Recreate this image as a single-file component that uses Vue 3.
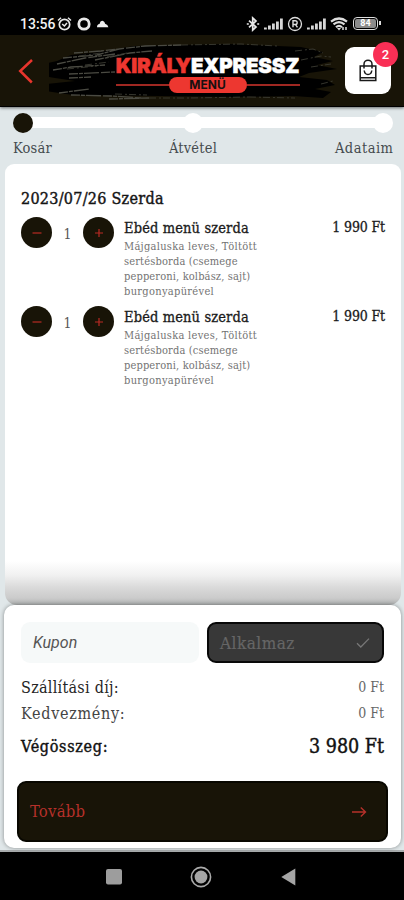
<script setup>
const steps = ['Kosár', 'Átvétel', 'Adataim']
const items = [1, 2].map((id) => ({
  id,
  qty: 1,
  name: 'Ebéd menü szerda',
  lines: ['Májgaluska leves, Töltött', 'sertésborda (csemege', 'pepperoni, kolbász, sajt)', 'burgonyapürével'],
  price: '1 990 Ft',
}))
const bars = [2, 4, 6, 8, 11]
</script>

<template>
  <div class="screen">
    <div class="status">
      <span class="clock">13:56</span>
      <svg class="status-left" width="52" height="16" viewBox="0 0 52 16" fill="none" stroke="#e8e8e8">
        <circle cx="7.5" cy="8.5" r="5.2" stroke-width="1.7" />
        <path d="M1 4.5 4 1.8M14 4.5 11 1.8M5.2 8l2.2 2 2.6-3" stroke-width="1.5" />
        <circle cx="27" cy="8" r="5.2" stroke-width="2.8" />
        <path d="M40 11.2q0-3 2.5-3.2 1-4 3.6-3 1.6.7 2 2.8 2.8.8 3.3 3.4z" fill="#eee" stroke="none" />
      </svg>
      <div class="status-right">
        <svg width="16" height="16" viewBox="0 0 16 16" fill="none" stroke="#e8e8e8" stroke-width="1.7">
          <path d="M4 4.6 11 11 7.7 14V2L11 5 4 11.4" />
          <path d="M1.8 8h2M12.2 8h2" />
        </svg>
        <svg class="signal" width="19" height="12" viewBox="0 0 19 12" fill="#d6d6d6">
          <rect v-for="(h, i) in bars" :key="i" :x="i * 4" :y="11.5 - h" width="2.8" :height="h" />
        </svg>
        <svg class="reg" width="16" height="16" viewBox="0 0 16 16" fill="none" stroke="#ddd">
          <circle cx="8" cy="8" r="6.5" stroke-width="1.3" />
          <path d="M6 11.3V4.8h2.3a1.8 1.8 0 0 1 0 3.7H6M8.5 8.6l2 2.7" stroke-width="1.4" />
        </svg>
        <svg class="signal" width="19" height="12" viewBox="0 0 19 12" fill="#d6d6d6">
          <rect v-for="(h, i) in bars" :key="i" :x="i * 4" :y="11.5 - h" width="2.8" :height="h" />
        </svg>
        <svg class="wifi" width="18" height="14" viewBox="0 0 18 14" fill="none" stroke="#ddd" stroke-width="2.2">
          <path d="M1 4.6q8-6.2 16 0M3.5 7.4q5.5-4.5 11 0M6 10.2q3-2.8 6 0" />
          <path d="M7 11 9 13.4l2-2.4z" fill="#ddd" stroke="none" />
          <path d="M13 10v3M16 10v3" stroke-width="1.5" />
        </svg>
        <div class="battery"><span>84</span></div>
      </div>
    </div>

    <header class="header">
      <svg class="back" width="16" height="26" viewBox="0 0 16 26" fill="none" stroke="#e8352d" stroke-width="2.5">
        <path d="M14 2 2.2 13 13.8 24.5" />
      </svg>
      <div class="brand">
        <svg class="brush" width="292" height="62" viewBox="0 0 292 62">
          <path
            fill="#000"
            d="M22 15 50 12 85 6 180 4l72 3 22 5-9 5 19 4-16 4 20 4-28 4-10 4 28 3 8 5-20 4 16 3-8 6-30-2-62 1-70-1-88-1-28-4 2-7 28-3-20-3-28-5 20-3-14-4 24-5z"
          />
          <g fill="none" stroke="#4a4a42" stroke-width="1.3" stroke-dasharray="9 1 4 1 15 2">
            <path d="M25 13 52 11 70 9M14 18l34-3 22-6 26-3 36-1M8 24l28-6 30-4M4 30l18-3 34-2M20 34l46-2M46 20l35-7 22-2" />
            <path d="M10 53l30-4M22 55l40 1 30 2M60 59l40-1M20 38l22-1" />
          </g>
          <g fill="none" stroke="#3b3b32" stroke-width=".9" stroke-dasharray="7 3 2 2">
            <path d="M132 5l60-1 36 2M246 11l18-2 10 4M252 20l20-4 10 1M262 27l20-3M272 44l12-3M100 58l40 0 60-1M200 57l46 1" />
            <path d="M18 29l30-3M30 16l22-3M36 25l24-3M58 17l20-4M66 54l32 1" />
          </g>
        </svg>
        <div class="title"><span>KIRÁLY</span>EXPRESSZ</div>
        <div class="sub"><b>MENÜ</b></div>
      </div>
      <div class="cart">
        <svg width="20" height="24" viewBox="0 0 20 24" fill="none" stroke="#191919" stroke-width="1.5">
          <path d="M2.2 7h15.6v14.5H2.2zM6 9.5V5.2a4 4 0 0 1 8 0v4.3M6.2 11.5q.6 4 3.8 4t3.8-4M2.2 18.8h15.6" />
        </svg>
        <span class="badge">2</span>
      </div>
    </header>

    <main class="body">
      <div class="stepper">
        <div class="track">
          <i v-for="(s, i) in steps" :key="s" :class="{ active: i === 0 }"></i>
        </div>
        <div class="labels">
          <span v-for="(s, i) in steps" :key="s" :class="'label' + i">{{ s }}</span>
        </div>
      </div>

      <section class="list">
        <h2>2023/07/26 Szerda</h2>
        <article v-for="item in items" :key="item.id" class="item">
          <button class="round">
            <svg width="12" height="12" viewBox="0 0 12 12"><path d="M1.5 6h9" /></svg>
          </button>
          <span class="qty">{{ item.qty }}</span>
          <button class="round">
            <svg width="12" height="12" viewBox="0 0 12 12"><path d="M2 6h8M6 2v8" /></svg>
          </button>
          <div class="info">
            <h3>{{ item.name }}</h3>
            <p v-for="(line, i) in item.lines" :key="line" :class="'line' + i">{{ line }}</p>
          </div>
          <span class="price">{{ item.price }}</span>
        </article>
      </section>

      <section class="summary">
        <div class="coupon">
          <div class="field">Kupon</div>
          <button class="apply">
            <span>Alkalmaz</span>
            <svg width="14" height="12" viewBox="0 0 14 12" fill="none" stroke="#777" stroke-width="1.3"><path d="M1 6.3 4.8 10 13 1.6" /></svg>
          </button>
        </div>
        <div class="row"><span class="ship">Szállítási díj:</span><span class="zero">0 Ft</span></div>
        <div class="row"><span class="disc">Kedvezmény:</span><span class="zero">0 Ft</span></div>
        <div class="row total"><span class="sum">Végösszeg:</span><span class="amount">3 980 Ft</span></div>
        <button class="next">
          <span>Tovább</span>
          <svg width="16" height="12" viewBox="0 0 16 12" fill="none" stroke="#b5302a" stroke-width="1.4"><path d="M1 6h13.5M9.8 1.5 14.5 6l-4.7 4.5" /></svg>
        </button>
      </section>
    </main>

    <nav class="nav">
      <svg width="16" height="16" viewBox="0 0 16 16"><rect width="16" height="15.5" rx="2" fill="#9d9d9d" /></svg>
      <svg class="home" width="22" height="22" viewBox="0 0 22 22"><circle cx="11" cy="11" r="9.6" fill="none" stroke="#aaa" stroke-width="1.6" /><circle cx="11" cy="11" r="6.4" fill="#a5a5a5" /></svg>
      <svg width="15" height="18" viewBox="0 0 15 18"><path d="M14.3.5v17L.3 9z" fill="#a5a5a5" /></svg>
    </nav>
  </div>
</template>

<style>
body { margin: 0; background: #000; }
</style>

<style scoped>
* { box-sizing: border-box; }
h2, h3, p { margin: 0; font-weight: 400; }
button { border: 0; padding: 0; font: inherit; }
.screen {
  width: 404px; height: 900px; overflow: hidden; display: flex; flex-direction: column; background: #000;
  font-family: "Roboto Slab", "DejaVu Serif Condensed", "DejaVu Serif", serif; font-stretch: condensed; white-space: nowrap;
}
.status { height: 35px; flex: none; padding: 12px 26px 0 20px; display: flex; align-items: center; color: #f2f2f2; }
.clock { font: 500 14px/22px Roboto, sans-serif; width: 37px; }
.status-left { flex: none; }
.status-right { margin-left: auto; display: flex; align-items: center; }
.signal { margin-left: 3px; }
.reg { margin: 0 1px 0 4px; }
.wifi { margin: 0 5px 0 4px; }
.battery { position: relative; width: 25px; height: 13px; border: 1.5px solid #ddd; border-radius: 4px; padding: 1px; display: flex; }
.battery::after { content: ""; position: absolute; right: -3.5px; top: 3px; width: 2px; height: 4px; background: #ddd; }
.battery span { flex: 1; background: #8b8b8b; border-radius: 2px; color: #fff; font: 700 9px/9px Roboto, sans-serif; text-align: center; }

.header { height: 72px; flex: none; background: #181407; display: flex; align-items: center; padding: 0 13px 0 18px; border-bottom: 1px solid #000; z-index: 1; box-shadow: 0 1px 3px #0008; }
.back { flex: none; }
.brand { position: relative; flex: 1; height: 71px; margin-left: 15px; display: flex; flex-direction: column; align-items: center; padding-top: 21px; }
.brush { position: absolute; left: 0; top: 5px; }
.title { position: relative; height: 21px; color: #fff; font: 900 20.5px/20px Inter, sans-serif; letter-spacing: -.2px; margin-left: 21px; -webkit-text-stroke: .5px #fff; }
.title span { color: #ed3730; -webkit-text-stroke: .5px #ed3730; }
.sub { position: relative; display: flex; align-items: center; margin-left: 21px; }
.sub::before, .sub::after { content: ""; width: 53px; height: 2px; background: #a02822; }
.sub b { width: 78px; height: 16px; border-radius: 8px; background: #ed3730; color: #181010; text-align: center; font: 700 12px/16px Inter, sans-serif; }
.cart { position: relative; width: 46px; height: 47px; background: #fff; border-radius: 9px; display: flex; align-items: center; justify-content: center; }
.badge { position: absolute; right: -7px; top: -5px; width: 25px; height: 25px; border-radius: 50%; background: #f92f55; color: #fff; text-align: center; font: 500 13px/25px Roboto, sans-serif; }

.body { height: 745px; flex: none; background: #e0e7e9; border-bottom: 2px solid #a9adae; padding: 5px 3px 3px 4px; }
.stepper { height: 52px; padding: 0 8px 0 9px; }
.track, .labels { display: grid; grid-template-columns: 140px 80px 160px; justify-items: center; }
.track { height: 21px; align-items: center; background: linear-gradient(#fff, #fff) 10px 5px / calc(100% - 20px) 11px no-repeat; }
.track i { width: 20px; height: 20px; border-radius: 50%; background: #fff; }
.track i:first-child, .labels span:first-child { justify-self: start; }
.track i:last-child, .labels span:last-child { justify-self: end; }
.track .active { background: #181407; }
.labels { font-size: 14.5px; line-height: 20px; padding-top: 5px; color: #454b4e; }
.label0 { letter-spacing: .2px; }
.label1 { letter-spacing: .2px; }
.label2 { letter-spacing: .5px; margin-right: -.5px; }
.list { height: 441px; margin-left: 1px; padding: 25px 16px 0; border-radius: 9px 9px 12px 12px; background: linear-gradient(#fff 0 397px, #f1f1f1 411px, #d9d9d9 424px, #cbcbcb 434px, #aeb1b1 441px); }
h2 { font-size: 16px; line-height: 20px; letter-spacing: .27px; color: #151515; -webkit-text-stroke: .4px; }
.item { height: 89px; padding-top: 8px; display: flex; align-items: flex-start; }
.round { width: 31px; height: 31px; border-radius: 50%; background: #181407; display: flex; align-items: center; justify-content: center; }
.round path { stroke: #b92a24; stroke-width: 1.2; fill: none; }
.qty { width: 31px; text-align: center; font-size: 14px; line-height: 34px; color: #555; }
.info { margin-left: 10px; flex: 1; padding-top: 1px; }
h3 { font-size: 14.5px; line-height: 20px; margin-bottom: 1px; letter-spacing: .13px; color: #1b1b1b; -webkit-text-stroke: .3px; }
.info p { font-size: 11px; line-height: 15px; letter-spacing: .28px; color: #737373; }
.info .line1 { letter-spacing: .15px; }
.info .line2 { letter-spacing: .13px; }
.info .line3 { letter-spacing: .3px; }
.price { font-size: 14px; line-height: 21px; letter-spacing: -.15px; color: #1b1b1b; -webkit-text-stroke: .3px; }
.summary { position: relative; height: 243px; background: #fff; border-radius: 10px; padding: 17px 17px 0; box-shadow: 0 0 4px #0006; }
.coupon { display: flex; height: 41px; gap: 8px; margin-bottom: 11px; }
.field { width: 178px; border-radius: 9px; background: #f6f9f9; padding-left: 12px; font: italic 16px/41px Roboto, sans-serif; color: #555; }
.apply { flex: 1; border: 2px solid #080808; border-radius: 9px; background: #383838; color: #666; display: flex; align-items: center; justify-content: space-between; padding: 0 12px 0 11px; font-size: 17px; letter-spacing: .5px; -webkit-text-stroke: .2px; }
.row { height: 26px; display: flex; justify-content: space-between; align-items: center; font-size: 16px; color: #252525; }
.ship { letter-spacing: .27px; }
.disc { letter-spacing: .7px; color: #444; }
.sum { letter-spacing: .7px; }
.zero { font-size: 14px; color: #666; }
.total { height: 40px; color: #111; -webkit-text-stroke: .4px; }
.amount { font-size: 19.5px; }
.next { width: calc(100% + 8px); margin: 15px -4px 0; height: 61px; border: 2px solid #080700; border-radius: 9px; background: #181407; color: #b5302a; font-size: 16.5px; letter-spacing: .25px; display: flex; align-items: center; justify-content: space-between; padding: 0 19px 0 11px; }
.nav { flex: 1; background: #000; display: flex; align-items: center; padding: 1px 108px 0 106px; justify-content: space-between; }
.home { margin-right: 2px; }
</style>
